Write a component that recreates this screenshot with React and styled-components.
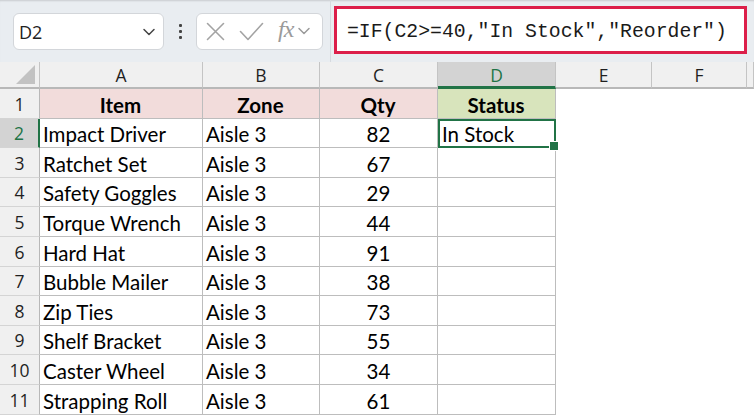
import styled, { createGlobalStyle, css } from 'styled-components';

const GlobalStyle = createGlobalStyle`
  html, body {
    margin: 0;
    padding: 0;
    background: #ffffff;
  }
  * {
    box-sizing: border-box;
  }
`;

const UI_FONT = `"Open Sans", "Noto Sans", "DejaVu Sans", sans-serif`;
const CELL_FONT = `Lato, "Open Sans", "Liberation Sans", sans-serif`;
const GREEN = '#217346';

const Page = styled.div`
  width: 754px;
  height: 416px;
  overflow: hidden;
  background: #ffffff;
`;

const Toolbar = styled.div`
  height: 62px;
  display: flex;
  align-items: center;
  padding-left: 13px;
  background: #e9edf1;
  box-shadow: inset 0 2px 2px -1px rgba(0, 0, 0, 0.14);
`;

const NameBox = styled.div`
  width: 151px;
  height: 37px;
  display: flex;
  align-items: center;
  justify-content: space-between;
  padding: 1px 7px 0 5px;
  background: #ffffff;
  border: 1px solid #d3d6da;
  border-radius: 6px;
  font-family: ${UI_FONT};
  font-size: 18px;
  color: #222;
`;

const Dots = styled.div`
  width: 32px;
  display: flex;
  flex-direction: column;
  align-items: center;
  gap: 3px;

  span {
    width: 3px;
    height: 3px;
    background: #444;
    border-radius: 1px;
  }
`;

const FxBox = styled.div`
  width: 127px;
  height: 37px;
  display: flex;
  align-items: center;
  padding-left: 9px;
  background: #ffffff;
  border: 1px solid #d3d6da;
  border-radius: 6px;
`;

const FxLabel = styled.span`
  font-family: "Liberation Serif", "DejaVu Serif", serif;
  font-style: italic;
  font-size: 24px;
  color: #9a9a9a;
  margin: -4px 4px 0 14px;
  letter-spacing: -1px;
`;

const Divider = styled.div`
  width: 1px;
  height: 62px;
  margin-left: 7px;
  background: #d6dadf;
`;

const FormulaBox = styled.div`
  width: 413px;
  height: 48px;
  margin-left: 3px;
  margin-top: -2px;
  display: flex;
  align-items: center;
  padding: 3px 0 0 10px;
  background: #ffffff;
  border: 3px solid #dc1f4a;
  font-family: "Liberation Mono", "DejaVu Sans Mono", monospace;
  font-size: 19.8px;
  color: #1a1a1a;
  white-space: nowrap;
`;

const Sheet = styled.div`
  display: grid;
  grid-template-columns: 40px 163px 117px 118px 118px 96px 95px 7px;
  grid-template-rows: 27px 30px 29px 30px 29px 30px 30px 29px 30px 29px 30px 30px;
`;

const Corner = styled.div`
  position: relative;
  background: #f0f0f0;
  border-right: 1px solid #c4c4c4;
  border-bottom: 2px solid #b8b8b8;

  &::after {
    content: '';
    position: absolute;
    right: 4px;
    bottom: 3px;
    width: 19px;
    height: 19px;
    background: #c2c2c2;
    clip-path: polygon(100% 0, 100% 100%, 0 100%);
  }
`;

const ColHeader = styled.div`
  display: flex;
  align-items: center;
  justify-content: center;
  padding-top: 1px;
  font-family: ${UI_FONT};
  font-size: 17.5px;
  color: #1f1f1f;
  background: #f0f0f0;
  border-right: 1px solid #c4c4c4;
  border-bottom: 2px solid #b8b8b8;

  ${props => props.$active && css`
    background: #d3d3d3;
    color: ${GREEN};
    border-bottom: 3px solid ${GREEN};
  `}
`;

const RowHeader = styled.div`
  display: flex;
  align-items: center;
  justify-content: center;
  font-family: ${UI_FONT};
  font-size: 17.5px;
  color: #1f1f1f;
  background: #f0f0f0;
  border-right: 1px solid #b8b8b8;
  border-bottom: 1px solid #d4d4d4;

  ${props => props.$active && css`
    background: #d3d3d3;
    color: ${GREEN};
    border-right: 2px solid ${GREEN};
  `}
`;

const Cell = styled.div`
  display: flex;
  align-items: center;
  padding: 2px 4px 0 3px;
  font-family: ${CELL_FONT};
  font-size: 20.5px;
  color: #000;
  white-space: nowrap;
  overflow: hidden;
  background: #ffffff;
  border-right: 1px solid #bdbdbd;
  border-bottom: 1px solid #bdbdbd;

  ${props => props.$align === 'center' && css`
    justify-content: center;
    padding-left: 4px;
  `}

  ${props => props.$head && css`
    justify-content: center;
    font-weight: 700;
    background: ${props.$head === 'green' ? '#d8e4bc' : '#f2dcdb'};
  `}
`;

const ActiveCell = styled(Cell)`
  position: relative;
  z-index: 1;
  overflow: visible;
  padding-left: 4px;
  outline: 2px solid ${GREEN};
  outline-offset: -2px;

  &::after {
    content: '';
    position: absolute;
    right: -4px;
    bottom: -4px;
    width: 8px;
    height: 8px;
    background: ${GREEN};
    border: 1px solid #ffffff;
  }
`;

const Blank = styled.div`
  background: #ffffff;
`;

const rows = [
  ['Impact Driver', 'Aisle 3', 82, 'In Stock'],
  ['Ratchet Set', 'Aisle 3', 67],
  ['Safety Goggles', 'Aisle 3', 29],
  ['Torque Wrench', 'Aisle 3', 44],
  ['Hard Hat', 'Aisle 3', 91],
  ['Bubble Mailer', 'Aisle 3', 38],
  ['Zip Ties', 'Aisle 3', 73],
  ['Shelf Bracket', 'Aisle 3', 55],
  ['Caster Wheel', 'Aisle 3', 34],
  ['Strapping Roll', 'Aisle 3', 61],
];

function Chevron({ color = '#444', size = 14 }) {
  return (
    <svg width={size} height={size} viewBox="0 0 14 14" fill="none">
      <path d="M2 4.5l5 5 5-5" stroke={color} strokeWidth="1.5" strokeLinecap="round" strokeLinejoin="round" />
    </svg>
  );
}

function Row({ n, item, zone, qty, status }) {
  const active = n === 2;
  return (
    <>
      <RowHeader $active={active}>{n}</RowHeader>
      <Cell>{item}</Cell>
      <Cell>{zone}</Cell>
      <Cell $align="center">{qty}</Cell>
      {active ? <ActiveCell>{status}</ActiveCell> : <Cell />}
      <Blank />
      <Blank />
      <Blank />
    </>
  );
}

function App() {
  return (
    <Page>
      <GlobalStyle />
      <Toolbar>
        <NameBox>
          <span>D2</span>
          <Chevron />
        </NameBox>
        <Dots>
          <span />
          <span />
          <span />
        </Dots>
        <FxBox>
          <svg width="19" height="19" viewBox="0 0 19 19" fill="none">
            <path d="M1.5 1.5l16 16M17.5 1.5l-16 16" stroke="#a3a3a3" strokeWidth="1.6" strokeLinecap="round" />
          </svg>
          <svg width="25" height="19" viewBox="0 0 25 19" fill="none" style={{ marginLeft: 14 }}>
            <path d="M1.5 9.5l7.5 8L23.5 1.5" stroke="#a3a3a3" strokeWidth="1.6" strokeLinecap="round" strokeLinejoin="round" />
          </svg>
          <FxLabel>fx</FxLabel>
          <Chevron color="#9a9a9a" size={14} />
        </FxBox>
        <Divider />
        <FormulaBox>=IF(C2&gt;=40,"In Stock","Reorder")</FormulaBox>
      </Toolbar>

      <Sheet>
        <Corner />
        {['A', 'B', 'C', 'D', 'E', 'F', ''].map(letter => (
          <ColHeader key={letter || 'G'} $active={letter === 'D'}>{letter}</ColHeader>
        ))}

        <RowHeader>1</RowHeader>
        <Cell $head="pink">Item</Cell>
        <Cell $head="pink">Zone</Cell>
        <Cell $head="pink">Qty</Cell>
        <Cell $head="green">Status</Cell>
        <Blank />
        <Blank />
        <Blank />

        {rows.map(([item, zone, qty, status], i) => (
          <Row key={item} n={i + 2} item={item} zone={zone} qty={qty} status={status} />
        ))}
      </Sheet>
    </Page>
  );
}

export default App;
